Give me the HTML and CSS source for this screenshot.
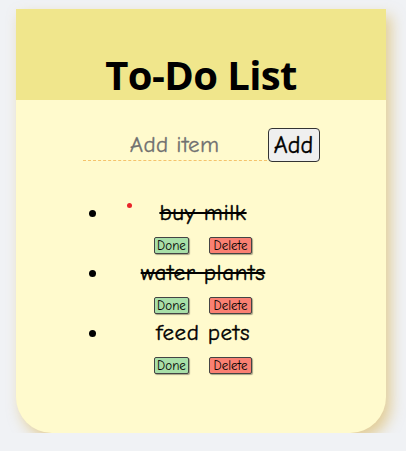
FILE: index.html
```html
<!DOCTYPE html>
<html lang="en">
<head>
<meta charset="utf-8">
<title>To-Do List</title>
<link rel="stylesheet" href="styles.css">
</head>
<body>
  <div class="card">
    <header class="card-header">
      <h1 class="title">To-Do List</h1>
    </header>
    <div class="card-body">
      <form class="add-row" onsubmit="return false">
        <input class="add-input" type="text" placeholder="Add item">
        <button class="add-btn" type="button">Add</button>
      </form>
      <ul class="todo-list">
        <li class="todo">
          <span class="dot"></span>
          <div class="todo-text done">buy milk</div>
          <div class="actions">
            <button class="btn btn-done" type="button">Done</button>
            <button class="btn btn-delete" type="button">Delete</button>
          </div>
        </li>
        <li class="todo">
          <div class="todo-text done">water plants</div>
          <div class="actions">
            <button class="btn btn-done" type="button">Done</button>
            <button class="btn btn-delete" type="button">Delete</button>
          </div>
        </li>
        <li class="todo">
          <div class="todo-text">feed pets</div>
          <div class="actions">
            <button class="btn btn-done" type="button">Done</button>
            <button class="btn btn-delete" type="button">Delete</button>
          </div>
        </li>
      </ul>
    </div>
  </div>
</body>
</html>
```
FILE: styles.css
```css
html, body {
  margin: 0;
  padding: 0;
  background: #f0f2f5;
}

body {
  padding: 9px 20px 0 16px;
  font-family: "Comic Sans MS", "Comic Neue", "Noto Sans", sans-serif;
}

.card {
  width: 370px;
  height: 424px;
  background: #fffacd;
  border-radius: 0 0 36px 36px;
  box-shadow: 5px 7px 14px rgba(214, 170, 60, 0.5);
  overflow: hidden;
}

.card-header {
  height: 91px;
  background: #f0e68c;
  display: flex;
  align-items: flex-end;
  justify-content: center;
}

.title {
  margin: 0 0 1px;
  font-family: "Open Sans", "Noto Sans", sans-serif;
  font-weight: 700;
  font-size: 40px;
  line-height: 48px;
  color: #000;
  letter-spacing: -0.6px;
}

.card-body {
  padding-top: 28px;
}

.add-row {
  display: flex;
  justify-content: center;
  align-items: flex-start;
  gap: 1px;
  margin: 0;
}

.add-input {
  width: 184px;
  height: 33px;
  box-sizing: border-box;
  border: none;
  border-bottom: 1px dashed #f5c36b;
  background: transparent;
  font-family: inherit;
  font-size: 23px;
  letter-spacing: 0.3px;
  text-align: center;
  padding: 0;
  outline: none;
  color: #333;
  -webkit-text-stroke: 0.3px #707070;
}

.add-input::placeholder {
  color: #707070;
}

.add-btn {
  width: 52px;
  height: 34px;
  box-sizing: border-box;
  font-family: inherit;
  font-size: 24px;
  padding: 0;
  color: #000;
  background: #efefef;
  border: 1px solid #333;
  border-radius: 4px;
  -webkit-text-stroke: 0.4px #000;
}

.todo-list {
  margin: 36px 90px 0 54px;
  padding-left: 40px;
  list-style: disc;
}

.todo {
  position: relative;
  text-align: center;
  height: 60px;
  font-size: 24px;
  line-height: 28px;
}

.dot {
  position: absolute;
  left: 17px;
  top: 5px;
  width: 5px;
  height: 5px;
  border-radius: 50%;
  background: #e8242a;
}

.todo-text {
  font-size: 23px;
  letter-spacing: 0.6px;
  line-height: 28px;
  color: #000;
  white-space: nowrap;
  -webkit-text-stroke: 0.4px #000;
}

.todo-text.done {
  text-decoration: line-through;
  text-decoration-thickness: 2px;
}

.actions {
  margin-top: 10px;
  display: flex;
  justify-content: center;
  gap: 20px;
}

.btn {
  height: 17px;
  box-sizing: border-box;
  font-family: inherit;
  font-size: 13px;
  line-height: 14px;
  padding: 0;
  border: 1px solid #444;
  border-radius: 2px;
  color: #000;
  box-shadow: 1px 1px 1px rgba(0, 0, 0, 0.35);
}

.btn-done {
  background: #a8dfa8;
  width: 35px;
}

.btn-delete {
  background: #fa8072;
  width: 43px;
}
```
